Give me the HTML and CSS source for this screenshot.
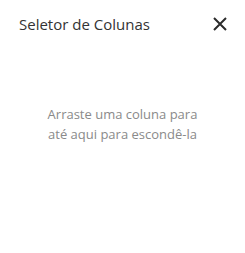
FILE: index.html
```html
<!DOCTYPE html>
<html lang="pt">
<head>
    <meta charset="UTF-8">
    <title>Seletor de Colunas</title>
    <link rel="stylesheet" href="styles.css">
</head>
<body>
<div class="chooser">
    <div class="chooser-header">
        <span class="chooser-title">Seletor de Colunas</span>
        <button class="chooser-close" type="button" aria-label="Fechar">
            <svg width="14" height="14" viewBox="0 0 14 14">
                <path d="M1 1L13 13M13 1L1 13" stroke="#2b2b2b" stroke-width="2" fill="none"/>
            </svg>
        </button>
    </div>
    <div class="chooser-body">
        Arraste uma coluna para<br>até aqui para escondê-la
    </div>
</div>
</body>
</html>
```

FILE: styles.css
```css
* {
    box-sizing: border-box;
}

body {
    margin: 0;
    background: #fff;
    font-family: "Open Sans", "Noto Sans", sans-serif;
}

.chooser {
    width: 245px;
    height: 253px;
}

.chooser-header {
    display: flex;
    align-items: center;
    justify-content: space-between;
    padding: 11px 18px 0 19px;
    height: 36px;
}

.chooser-title {
    font-size: 15px;
    color: #333;
}

.chooser-close {
    border: 0;
    background: none;
    padding: 0;
    width: 14px;
    height: 14px;
    display: flex;
    cursor: pointer;
}

.chooser-body {
    padding-top: 68px;
    text-align: center;
    font-size: 13px;
    line-height: 20px;
    color: #8a8a8a;
}
```
